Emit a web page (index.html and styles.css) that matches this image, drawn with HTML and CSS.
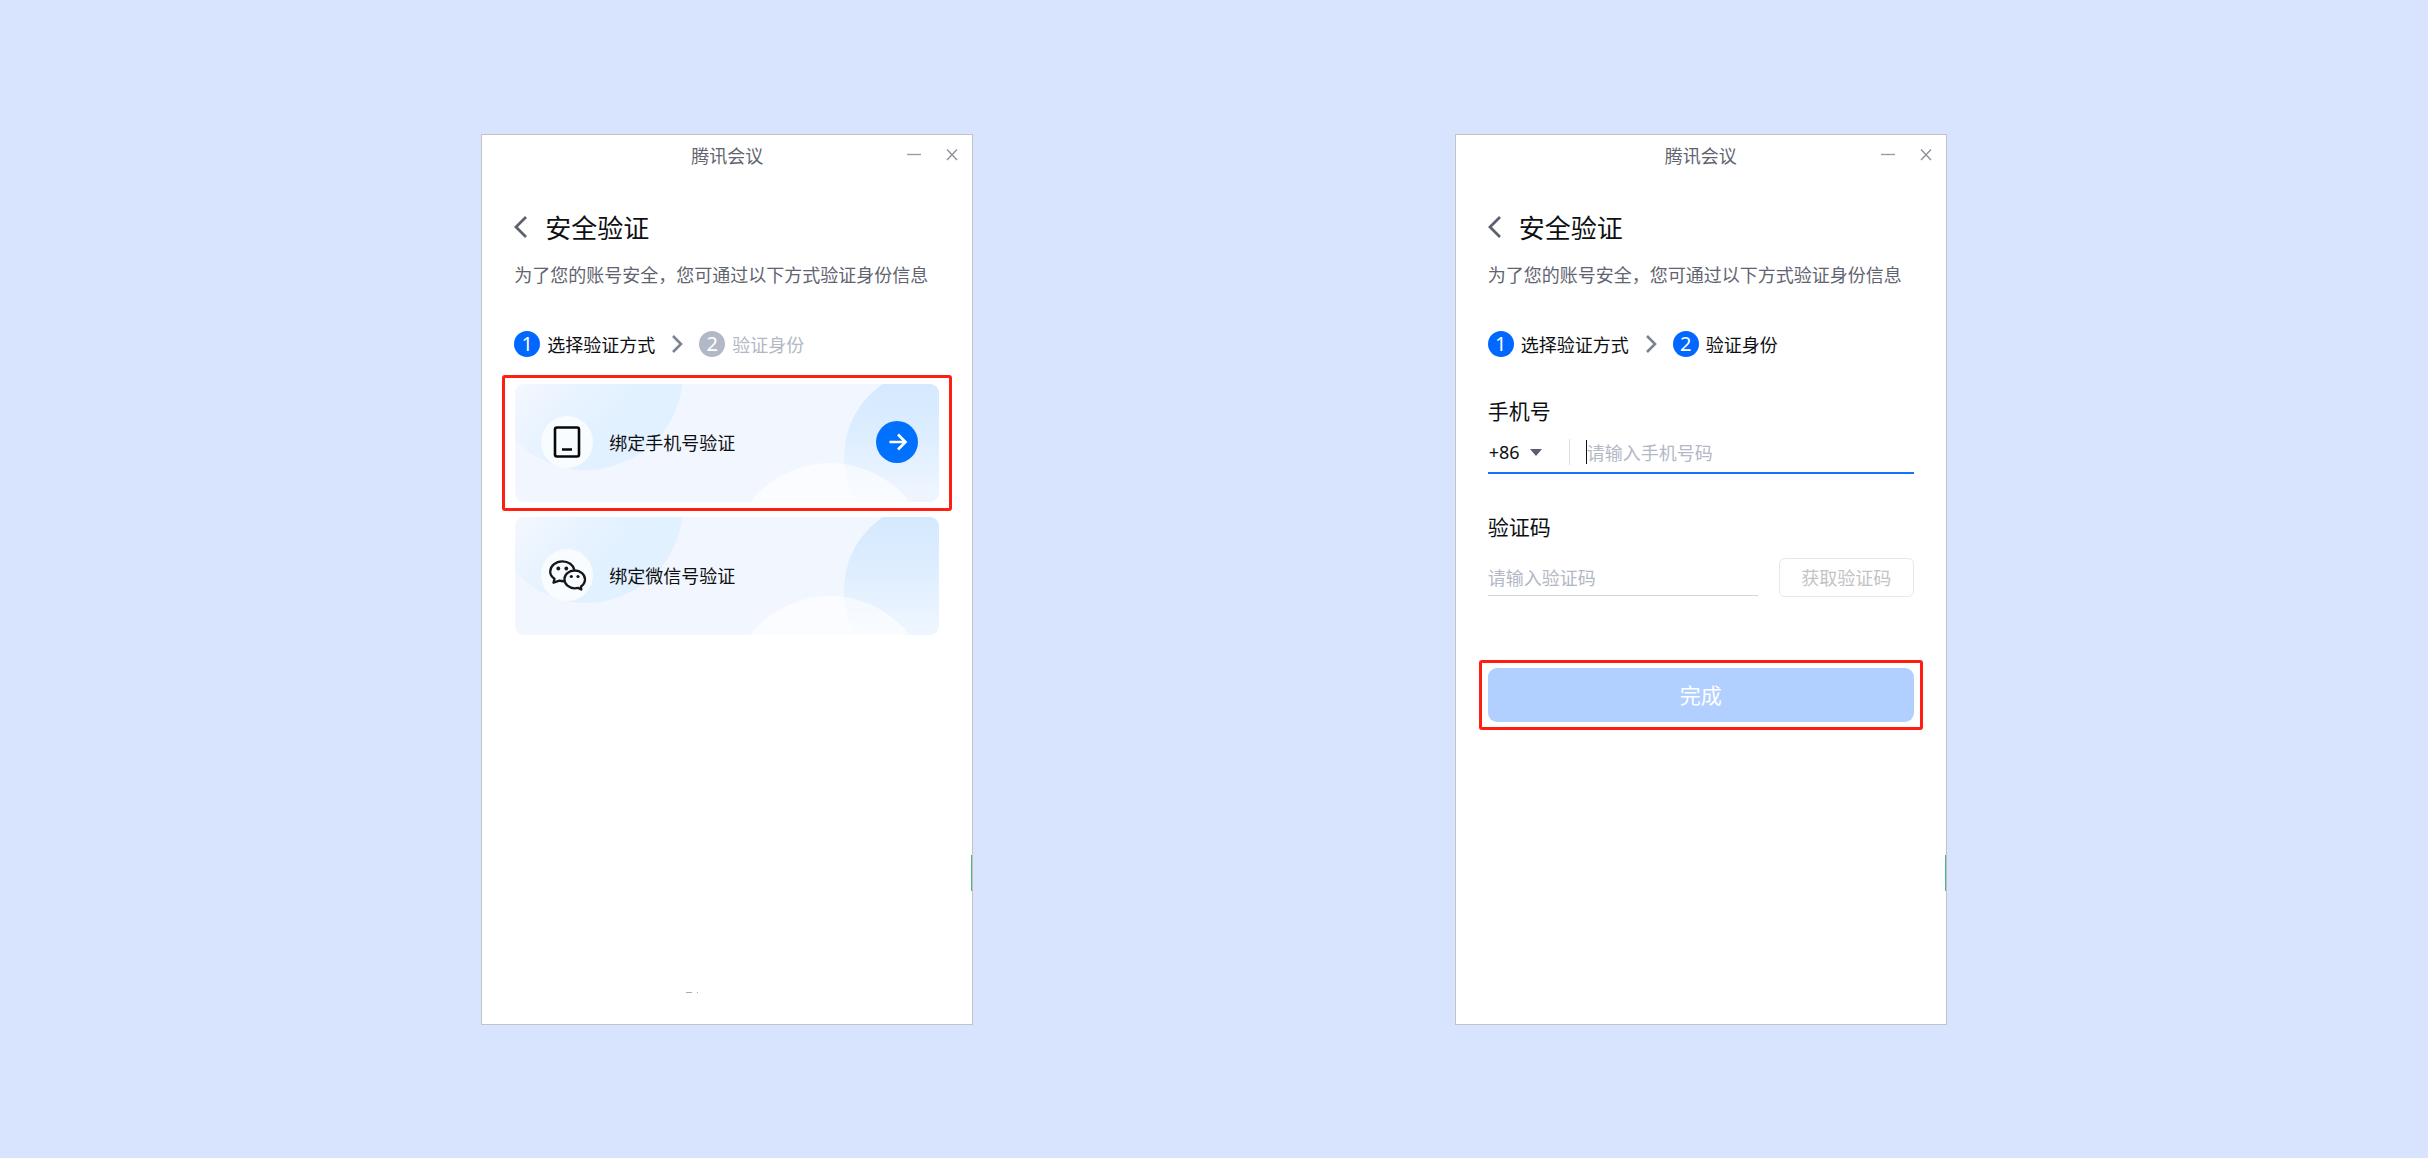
FILE: index.html
```html
<!DOCTYPE html>
<html lang="zh-CN">
<head>
<meta charset="utf-8">
<title>腾讯会议 安全验证</title>
<link rel="stylesheet" href="styles.css">
</head>
<body>
<svg class="defs" aria-hidden="true">
  <defs>
    <linearGradient id="blob" gradientUnits="userSpaceOnUse" x1="10" y1="0" x2="80" y2="60">
      <stop offset="0" stop-color="#f3f7ff"/>
      <stop offset="0.5" stop-color="#e8f3ff"/>
      <stop offset="1" stop-color="#e2f1ff"/>
    </linearGradient>
    <linearGradient id="disc" gradientUnits="userSpaceOnUse" x1="0" y1="0" x2="0" y2="118">
      <stop offset="0" stop-color="#d5e9fe"/>
      <stop offset="0.4" stop-color="#dcedff"/>
      <stop offset="1" stop-color="#f0f6ff"/>
    </linearGradient>
    <symbol id="card-art" viewBox="0 0 424 118">
      <circle cx="71" cy="-11" r="97" fill="url(#blob)"/>
      <circle cx="417" cy="73" r="88" fill="url(#disc)"/>
      <circle cx="315" cy="180" r="101" fill="#fff" fill-opacity="0.6"/>
    </symbol>
    <symbol id="back" viewBox="0 0 14 24">
      <path d="M12 2 2 12l10 10" fill="none" stroke="#5c6170" stroke-width="2.8"/>
    </symbol>
    <symbol id="next" viewBox="0 0 12 20">
      <path d="M2 2l8 8-8 8" fill="none" stroke="#7d8291" stroke-width="2.6"/>
    </symbol>
    <symbol id="minimize" viewBox="0 0 14 14">
      <path d="M0 6.5h14" stroke="#9a9da6" stroke-width="1.4"/>
    </symbol>
    <symbol id="close" viewBox="0 0 14 14">
      <path d="M2 1.500l10 10.500M12 1.500 2 12" stroke="#8d919b" stroke-width="1.400"/>
    </symbol>
  </defs>
</svg>
<main class="stage">
  <section class="window">
    <header class="titlebar">
      <span class="app-name">腾讯会议</span>
      <div class="controls">
        <button class="control" type="button" aria-label="最小化"><svg class="control-icon"><use href="#minimize"/></svg></button>
        <button class="control" type="button" aria-label="关闭"><svg class="control-icon"><use href="#close"/></svg></button>
      </div>
    </header>
    <div class="content">
      <div class="heading">
        <button class="back" type="button" aria-label="返回"><svg class="back-icon"><use href="#back"/></svg></button>
        <h1 class="title">安全验证</h1>
      </div>
      <p class="hint">为了您的账号安全，您可通过以下方式验证身份信息</p>
      <ol class="steps">
        <li class="step"><span class="number">1</span>选择验证方式</li>
        <li class="step"><svg class="next-icon" aria-hidden="true"><use href="#next"/></svg></li>
        <li class="step pending"><span class="number">2</span>验证身份</li>
      </ol>
      <div class="methods">
        <div class="marked marked-card">
          <button class="card" type="button">
            <svg class="card-art" viewBox="0 0 424 118" preserveAspectRatio="none" aria-hidden="true"><use href="#card-art"/></svg>
            <span class="badge">
              <svg class="badge-icon" viewBox="0 0 40 40" aria-hidden="true">
                <rect x="8" y="5.500" width="24" height="29" rx="2" fill="none" stroke="#060709" stroke-width="2.600"/>
                <path d="M15 27.500h10" stroke="#060709" stroke-width="2.600"/>
              </svg>
            </span>
            <span class="card-label">绑定手机号验证</span>
            <span class="go">
              <svg class="go-icon" viewBox="0 0 42 42" aria-hidden="true">
                <path d="M13.500 21h16M22 13.500l7.500 7.500-7.500 7.500" fill="none" stroke="#fff" stroke-width="2.600"/>
              </svg>
            </span>
          </button>
        </div>
        <button class="card" type="button">
          <svg class="card-art" viewBox="0 0 424 118" preserveAspectRatio="none" aria-hidden="true"><use href="#card-art"/></svg>
          <span class="badge">
            <svg class="badge-icon" viewBox="0 0 40 40" aria-hidden="true">
              <g fill="none" stroke="#15171a" stroke-width="2.300" stroke-linejoin="round">
                <path d="M17 26.200c-1.500.1-3.200-.1-4.500-.5L6.500 27.700l1-4C4.700 21.900 3.200 19.500 3.200 16.800 3.200 11.200 8.600 6.300 15.300 6.300c6.200 0 11 3.600 12 8.500"/>
                <path d="M27.800 15.500c-6 0-10.400 4-10.400 8.800 0 5 4.700 9 10.400 9 1.200 0 2.300-.2 3.300-.4l3.200 1.600-.3-3c2.400-1.700 4-4.300 4-7.200 0-4.800-4.600-8.800-10.200-8.800z"/>
              </g>
              <g fill="#15171a"><circle cx="11.300" cy="13.500" r="1.900"/><circle cx="19.300" cy="13.500" r="1.900"/><circle cx="24.300" cy="21.500" r="1.600"/><circle cx="31" cy="21.500" r="1.600"/></g>
            </svg>
          </span>
          <span class="card-label">绑定微信号验证</span>
        </button>
      </div>
    </div>
    <span class="edge"></span>
    <span class="speck"></span>
  </section>

  <section class="window">
    <header class="titlebar">
      <span class="app-name">腾讯会议</span>
      <div class="controls">
        <button class="control" type="button" aria-label="最小化"><svg class="control-icon"><use href="#minimize"/></svg></button>
        <button class="control" type="button" aria-label="关闭"><svg class="control-icon"><use href="#close"/></svg></button>
      </div>
    </header>
    <div class="content">
      <div class="heading">
        <button class="back" type="button" aria-label="返回"><svg class="back-icon"><use href="#back"/></svg></button>
        <h1 class="title">安全验证</h1>
      </div>
      <p class="hint">为了您的账号安全，您可通过以下方式验证身份信息</p>
      <ol class="steps">
        <li class="step"><span class="number">1</span>选择验证方式</li>
        <li class="step"><svg class="next-icon" aria-hidden="true"><use href="#next"/></svg></li>
        <li class="step"><span class="number">2</span>验证身份</li>
      </ol>
      <form class="form">
        <label class="label" for="phone">手机号</label>
        <div class="phone-row">
          <div class="area">
            <select class="area-select" aria-label="国家或地区代码"><option>+86</option></select>
            <svg class="area-caret" viewBox="0 0 12 7" aria-hidden="true"><path d="M0 0h12L6 7z" fill="#5b5f6c"/></svg>
          </div>
          <div class="phone-field">
            <input class="input" id="phone" type="tel" placeholder="请输入手机号码">
          </div>
        </div>
        <label class="label" for="code">验证码</label>
        <div class="code-row">
          <input class="input code-input" id="code" type="text" placeholder="请输入验证码">
          <button class="get-code" type="button">获取验证码</button>
        </div>
        <div class="marked marked-submit">
          <button class="submit" type="button">完成</button>
        </div>
      </form>
    </div>
    <span class="edge"></span>
  </section>
</main>
</body>
</html>
```
FILE: styles.css
```css
*,
*::before,
*::after {
  box-sizing: border-box;
}

body {
  margin: 0;
  background: #d8e3fe;
  color: #0e0f12;
  font-family: "Noto Sans CJK SC", "Noto Sans", sans-serif;
  font-size: 18px;
  line-height: 24px;
}

button,
input,
select {
  margin: 0;
  padding: 0;
  border: 0;
  background: none;
  color: inherit;
  font: inherit;
}

svg {
  display: block;
}

.defs {
  position: absolute;
  width: 0;
  height: 0;
}

.stage {
  display: flex;
  flex-wrap: wrap;
  justify-content: space-evenly;
  min-height: 100vh;
  padding: 134px 0 133px;
}

.window {
  position: relative;
  flex: 0 1 492px;
  min-height: 891px;
  border: 1px solid #c2c3c6;
  background: #fff;
}

.titlebar {
  display: grid;
  grid-template-columns: 1fr auto 1fr;
  align-items: center;
  height: 40px;
  padding-right: 13px;
}

.app-name {
  grid-column: 2;
  padding-left: 13px;
  color: #5f6470;
}

.controls {
  display: flex;
  justify-content: flex-end;
  gap: 24px;
}

.control-icon {
  width: 14px;
  height: 14px;
}

.content {
  padding: 34px 32px;
}

.heading {
  display: flex;
  align-items: center;
  gap: 17px;
}

.back-icon {
  width: 14px;
  height: 24px;
}

.title {
  margin: 0;
  font-size: 26px;
  font-weight: 400;
  line-height: 36px;
}

.hint {
  margin: 17px 0 45px;
  color: #5f6470;
  white-space: nowrap;
}

.steps {
  display: flex;
  align-items: center;
  gap: 16px;
  margin: 0;
  padding: 0;
  list-style: none;
}

.step {
  display: flex;
  align-items: center;
  gap: 7px;
}

.number {
  width: 26px;
  border-radius: 50%;
  background: #0067ff;
  color: #fff;
  font-family: "Noto Sans", sans-serif;
  font-size: 20px;
  line-height: 26px;
  text-align: center;
}

.pending {
  color: #b3b8c6;
}

.pending .number {
  background: #b3b8c6;
}

.next-icon {
  width: 12px;
  height: 20px;
}

.methods {
  display: grid;
  gap: 15px;
  margin-top: 27px;
  padding: 0 1px;
}

.card {
  position: relative;
  display: flex;
  align-items: center;
  gap: 16px;
  width: 100%;
  height: 118px;
  padding: 0 21px 2px 26px;
  border-radius: 9px;
  overflow: hidden;
  background: #f2f7ff;
  text-align: left;
}

.card-art {
  position: absolute;
  inset: 0;
  width: 100%;
  height: 100%;
}

.badge,
.card-label,
.go {
  position: relative;
}

.badge {
  padding: 6px;
  border-radius: 50%;
  background: #f9fcff;
}

.badge-icon {
  width: 40px;
  height: 40px;
}

.card-label {
  flex: 1;
}

.go {
  border-radius: 50%;
  background: #0071ff;
}

.go-icon {
  width: 42px;
  height: 42px;
}

.marked {
  position: relative;
}

.marked::after {
  content: "";
  position: absolute;
  border: 3px solid #ff1e12;
  border-radius: 3px;
  pointer-events: none;
}

.marked-card::after {
  inset: -9px -13px;
}

.marked-submit::after {
  inset: -8px -9px;
}

.form {
  margin-top: 39px;
}

.label {
  display: block;
  font-size: 21px;
  line-height: 28px;
}

.phone-row {
  display: flex;
  align-items: center;
  height: 42px;
  margin: 8px 0 38px;
  border-bottom: 2px solid #1673ff;
}

.area {
  position: relative;
  width: 82px;
  height: 26px;
  border-right: 1px solid #dcdee4;
}

.area-select {
  width: 100%;
  height: 26px;
  padding-left: 1px;
  appearance: none;
  font-family: "Noto Sans", "Noto Sans CJK SC", sans-serif;
}

.area-caret {
  position: absolute;
  top: 10px;
  left: 42px;
  width: 12px;
  height: 7px;
  pointer-events: none;
}

.phone-field {
  flex: 1;
  margin-left: 16px;
  border-left: 1px solid #111;
}

.input {
  display: block;
  width: 100%;
  height: 24px;
  outline: 0;
}

.input::placeholder {
  color: #b3b8c6;
  opacity: 1;
}

.code-row {
  display: flex;
  gap: 21px;
  margin: 18px 0 71px;
}

.code-input {
  flex: 1;
  width: auto;
  min-width: 0;
  height: 38px;
  border-bottom: 1px solid #d5d6d9;
}

.get-code {
  width: 135px;
  height: 39px;
  padding-bottom: 2px;
  border: 1px solid #e7e8ee;
  border-radius: 6px;
  color: #c2c3c6;
}

.submit {
  display: block;
  width: 100%;
  height: 54px;
  padding-bottom: 2px;
  border-radius: 9px;
  background: #b2d0ff;
  color: #fff;
  font-size: 21px;
}

.edge {
  position: absolute;
  right: 0;
  bottom: 133px;
  width: 1px;
  height: 36px;
  background: #4bb489;
}

.speck {
  position: absolute;
  bottom: 31px;
  left: 204px;
  width: 12px;
  height: 1px;
  background: linear-gradient(to right, #a9aab3 6px, transparent 6px, transparent 11px, #a9aab3 11px);
}
```
